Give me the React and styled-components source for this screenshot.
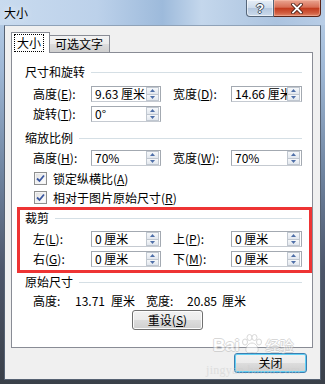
import React from 'react'
import styled, { createGlobalStyle } from 'styled-components'

const GlobalStyle = createGlobalStyle`
  html, body {
    margin: 0;
    padding: 0;
    background: #fff;
  }
  body {
    font-family: "Noto Sans CJK SC", "Noto Sans", sans-serif;
    font-size: 12px;
    color: #000;
  }
`

const Window = styled.div`
  position: relative;
  width: 325px;
  height: 384px;
  display: flex;
  flex-direction: column;
  overflow: hidden;
  background: linear-gradient(180deg, #bcd2ea 0%, #9fb8d6 18%, #6f84a0 45%, #4d566a 70%, #3a4049 100%);
`

const TitleBar = styled.div`
  height: 25px;
  flex: none;
  display: flex;
  align-items: flex-start;
  padding-left: 4px;
  background: linear-gradient(90deg, #c9dbef 0%, #bcd1ea 30%, #9dbadb 50%, #c4d7ec 62%, #abc3df 85%, #b8cde6 100%);
`

const Title = styled.span`
  align-self: center;
  font-size: 12px;
  line-height: 14px;
  margin-top: 1px;
  text-shadow: 0 0 6px rgba(255, 255, 255, 0.9);
`

const CaptionButtons = styled.div`
  margin-left: auto;
  margin-right: 4px;
  display: flex;
`

const HelpButton = styled.div`
  width: 28px;
  height: 17px;
  box-sizing: border-box;
  border: 1px solid #55667a;
  border-top: none;
  border-radius: 0 0 0 4px;
  background: linear-gradient(180deg, #e6eef7 0%, #cddbeb 50%, #b4c7de 51%, #cbdaeb 100%);
  box-shadow: inset 0 0 0 1px rgba(255, 255, 255, 0.55);
  display: flex;
  align-items: center;
  justify-content: center;
  color: #fff;
  font-family: "Liberation Sans", sans-serif;
  font-weight: bold;
  font-size: 13px;
  line-height: 13px;
  text-shadow: 1px 0 0 #3d4b5c, -1px 0 0 #3d4b5c, 0 1px 0 #3d4b5c, 0 -1px 0 #3d4b5c;
`

const CloseButton = styled.div`
  width: 47px;
  height: 17px;
  box-sizing: border-box;
  border: 1px solid #5a2418;
  border-top: none;
  border-left: none;
  border-radius: 0 0 4px 0;
  background: linear-gradient(180deg, #eaa592 0%, #d86e55 45%, #c23b1e 52%, #d05c3e 80%, #e0876a 100%);
  box-shadow: inset 0 0 0 1px rgba(255, 200, 180, 0.45);
  display: flex;
  align-items: center;
  justify-content: center;
`

const Content = styled.div`
  flex: 1;
  margin: 0 4px 4px;
  box-sizing: border-box;
  border: 1px solid #566273;
  border-top-color: #8fa2b8;
  background: #f0f0f0;
  padding: 7px 7px 0 6px;
  display: flex;
  flex-direction: column;
`

const Tabs = styled.div`
  display: flex;
  align-items: flex-end;
  height: 20px;
  position: relative;
  z-index: 1;
  margin-bottom: -1px;
`

const Tab = styled.div`
  box-sizing: border-box;
  width: ${p => p.$w}px;
  height: ${p => (p.$active ? 21 : 18)}px;
  border: 1px solid #898c95;
  border-left-width: ${p => (p.$first ? 1 : 0)}px;
  border-bottom: ${p => (p.$active ? 'none' : '1px solid #898c95')};
  background: ${p =>
    p.$active ? '#fff' : 'linear-gradient(180deg, #f3f3f3 0%, #ebebeb 50%, #dddddd 51%, #cfcfcf 100%)'};
  padding: ${p => (p.$active ? '1px 1px 0 2px' : '0 0 0 5px')};
  line-height: 16px;
  white-space: nowrap;
`

const FocusLabel = styled.span`
  display: inline-block;
  border: 1px dotted #000;
  padding: 0 2px;
  line-height: 16px;
`

const Panel = styled.div`
  box-sizing: border-box;
  width: 302px;
  height: 296px;
  border: 1px solid #898c95;
  background: #fff;
  padding-top: 12px;
  display: flex;
  flex-direction: column;
`

const Section = styled.div`
  padding: 0 10px 0 13px;
  margin-top: ${p => p.$mt || 0}px;
  display: flex;
  flex-direction: column;
`

const CropFrame = styled.div`
  margin: 3px 0 0 5px;
  border: 3px solid #ee3434;
  padding: 1px 7px 3px 5px;
  display: flex;
  flex-direction: column;
`

const Header = styled.div`
  height: 14px;
  display: flex;
  align-items: center;
  gap: 6px;
  line-height: 14px;
  white-space: nowrap;
  &::after {
    content: '';
    flex: 1;
    height: 1px;
    background: #d5dfe5;
  }
`

const Row = styled.div`
  display: grid;
  grid-template-columns: 58px 70px 12px 58px 71px;
  align-items: center;
  height: 16px;
  padding-left: 8px;
  margin-top: ${p => p.$mt}px;
`

const Label = styled.span`
  grid-column: ${p => p.$col};
  white-space: nowrap;
  line-height: 14px;
`

const Field = styled.div`
  grid-column: ${p => p.$col};
  box-sizing: border-box;
  height: 16px;
  border: 1px solid #a3a9b1;
  border-bottom-color: #c5cad1;
  background: #fff;
  display: flex;
`

const Value = styled.span`
  flex: 1;
  overflow: hidden;
  white-space: nowrap;
  padding-left: 3px;
  line-height: 14px;
`

const Spin = styled.div`
  width: 13px;
  margin: 0 1px 0 0;
  display: flex;
  flex-direction: column;
`

const SpinPart = styled.div`
  flex: 1;
  box-sizing: border-box;
  border: 1px solid #c0c7d0;
  border-top-width: ${p => (p.$down ? 0 : 1)}px;
  background: linear-gradient(180deg, #f6f8fa 0%, #e2e7ee 100%);
  display: flex;
  align-items: center;
  justify-content: center;
`

const CheckRow = styled.div`
  display: flex;
  align-items: center;
  gap: 6px;
  height: 14px;
  padding-left: 9px;
  margin-top: ${p => p.$mt}px;
  white-space: nowrap;
`

const CheckBox = styled.div`
  width: 13px;
  height: 13px;
  box-sizing: border-box;
  border: 1px solid #8e8f8f;
  background: linear-gradient(135deg, #dcdcdc 0%, #f4f4f4 60%, #ffffff 100%);
  box-shadow: inset 0 0 0 1px #f4f4f4;
  display: flex;
  align-items: center;
  justify-content: center;
`

const InfoRow = styled.div`
  display: grid;
  grid-template-columns: 42px 36px 35px 41px 35px auto;
  height: 14px;
  line-height: 14px;
  padding-left: 8px;
  margin-top: 5px;
  white-space: nowrap;
`

const PushButton = styled.div`
  box-sizing: border-box;
  width: ${p => p.$w}px;
  height: 20px;
  border: 1px solid ${p => (p.$default ? '#3c7fb1' : '#707070')};
  border-radius: 3px;
  background: linear-gradient(180deg, #f2f2f2 0%, #ebebeb 50%, #dddddd 51%, #cfcfcf 100%);
  box-shadow: inset 0 0 0 1px ${p => (p.$default ? '#61d0f5' : '#fcfcfc')};
  display: flex;
  align-items: center;
  justify-content: center;
  line-height: 14px;
  margin-left: ${p => p.$ml || 0}px;
  margin-top: ${p => p.$mt || 0}px;
  align-self: ${p => p.$align || 'flex-start'};
  margin-right: ${p => p.$mr || 0}px;
`

const Watermark = styled.div`
  position: absolute;
  left: 206px;
  top: 334px;
  display: flex;
  flex-direction: column;
  align-items: center;
  color: #fff;
  opacity: 0.55;
  pointer-events: none;
  font-family: "Liberation Sans", sans-serif;
`

const MarkLogo = styled.div`
  display: flex;
  align-items: flex-end;
  gap: 2px;
  font-size: 17px;
  font-weight: bold;
  line-height: 17px;
  text-shadow: 1px 0 0 #b8b8b8, -1px 0 0 #b8b8b8, 0 1px 0 #b8b8b8, 0 -1px 0 #b8b8b8;
`

const MarkSmall = styled.span`
  font-size: 14px;
  font-family: "Noto Sans CJK SC", sans-serif;
  font-weight: normal;
`

const MarkUrl = styled.span`
  margin-top: 9px;
  font-family: "Liberation Serif", serif;
  font-size: 12px;
  letter-spacing: 0.3px;
  color: #cfcfcf;
`

const Key = ({ k }) => (
  <>
    (<u>{k}</u>):
  </>
)

const Spinner = () => (
  <Spin>
    <SpinPart>
      <svg width="5" height="3" viewBox="0 0 5 3">
        <path d="M0 3 L2.5 0 L5 3 Z" fill="#4f6fa8" />
      </svg>
    </SpinPart>
    <SpinPart $down>
      <svg width="5" height="3" viewBox="0 0 5 3">
        <path d="M0 0 L2.5 3 L5 0 Z" fill="#4f6fa8" />
      </svg>
    </SpinPart>
  </Spin>
)

const Input = ({ col, value }) => (
  <Field $col={col}>
    <Value>{value}</Value>
    <Spinner />
  </Field>
)

const Check = ({ children, mt }) => (
  <CheckRow $mt={mt}>
    <CheckBox>
      <svg width="9" height="9" viewBox="0 0 9 9">
        <path d="M1 4.5 L3.5 7 L8 1.5" fill="none" stroke="#3a57a0" strokeWidth="1.8" />
      </svg>
    </CheckBox>
    <span>{children}</span>
  </CheckRow>
)

export default function App() {
  return (
    <>
      <GlobalStyle />
      <Window>
        <TitleBar>
          <Title>大小</Title>
          <CaptionButtons>
            <HelpButton>?</HelpButton>
            <CloseButton>
              <svg width="12" height="11" viewBox="0 0 12 11">
                <path d="M2 1.5 L10 9.5 M10 1.5 L2 9.5" stroke="#4a1e15" strokeWidth="3.6" strokeLinecap="square" />
                <path d="M2 1.5 L10 9.5 M10 1.5 L2 9.5" stroke="#fff" strokeWidth="1.8" strokeLinecap="square" />
              </svg>
            </CloseButton>
          </CaptionButtons>
        </TitleBar>

        <Content>
          <Tabs>
            <Tab $w={39} $active $first>
              <FocusLabel>大小</FocusLabel>
            </Tab>
            <Tab $w={60}>可选文字</Tab>
          </Tabs>

          <Panel>
            <Section>
              <Header>尺寸和旋转</Header>
              <Row $mt={7}>
                <Label $col={1}>高度<Key k="E" /></Label>
                <Input col={2} value="9.63 厘米" />
                <Label $col={4}>宽度<Key k="D" /></Label>
                <Input col={5} value="14.66 厘米" />
              </Row>
              <Row $mt={4}>
                <Label $col={1}>旋转<Key k="T" /></Label>
                <Input col={2} value="0°" />
              </Row>
            </Section>

            <Section $mt={9}>
              <Header>缩放比例</Header>
              <Row $mt={5}>
                <Label $col={1}>高度<Key k="H" /></Label>
                <Input col={2} value="70%" />
                <Label $col={4}>宽度<Key k="W" /></Label>
                <Input col={5} value="70%" />
              </Row>
              <Check mt={5}>锁定纵横比(<u>A</u>)</Check>
              <Check mt={5}>相对于图片原始尺寸(<u>R</u>)</Check>
            </Section>

            <CropFrame>
              <Header>裁剪</Header>
              <Row $mt={6}>
                <Label $col={1}>左<Key k="L" /></Label>
                <Input col={2} value="0 厘米" />
                <Label $col={4}>上<Key k="P" /></Label>
                <Input col={5} value="0 厘米" />
              </Row>
              <Row $mt={4}>
                <Label $col={1}>右<Key k="G" /></Label>
                <Input col={2} value="0 厘米" />
                <Label $col={4}>下<Key k="M" /></Label>
                <Input col={5} value="0 厘米" />
              </Row>
            </CropFrame>

            <Section $mt={2}>
              <Header>原始尺寸</Header>
              <InfoRow>
                <span>高度:</span>
                <span>13.71</span>
                <span>厘米</span>
                <span>宽度:</span>
                <span>20.85</span>
                <span>厘米</span>
              </InfoRow>
              <PushButton $w={71} $ml={107} $mt={2}>
                重设(<u>S</u>)
              </PushButton>
            </Section>
          </Panel>

          <PushButton $w={73} $default $mt={5} $align="flex-end" $mr={6}>
            关闭
          </PushButton>
        </Content>

        <Watermark>
          <MarkLogo>
            Bai
            <svg width="22" height="20" viewBox="0 0 22 20">
              <g fill="#fff" stroke="#b8b8b8" strokeWidth="1">
                <ellipse cx="4" cy="8" rx="2.5" ry="3" />
                <ellipse cx="8.5" cy="3.5" rx="2.5" ry="3" />
                <ellipse cx="13.5" cy="3.5" rx="2.5" ry="3" />
                <ellipse cx="18" cy="8" rx="2.5" ry="3" />
                <path d="M11 9 C7 9 4 14 5 17 C6 19.5 9 18.5 11 18.5 C13 18.5 16 19.5 17 17 C18 14 15 9 11 9 Z" />
              </g>
            </svg>
            <MarkSmall>经验</MarkSmall>
          </MarkLogo>
          <MarkUrl>jingyan.baidu.com</MarkUrl>
        </Watermark>
      </Window>
    </>
  )
}
